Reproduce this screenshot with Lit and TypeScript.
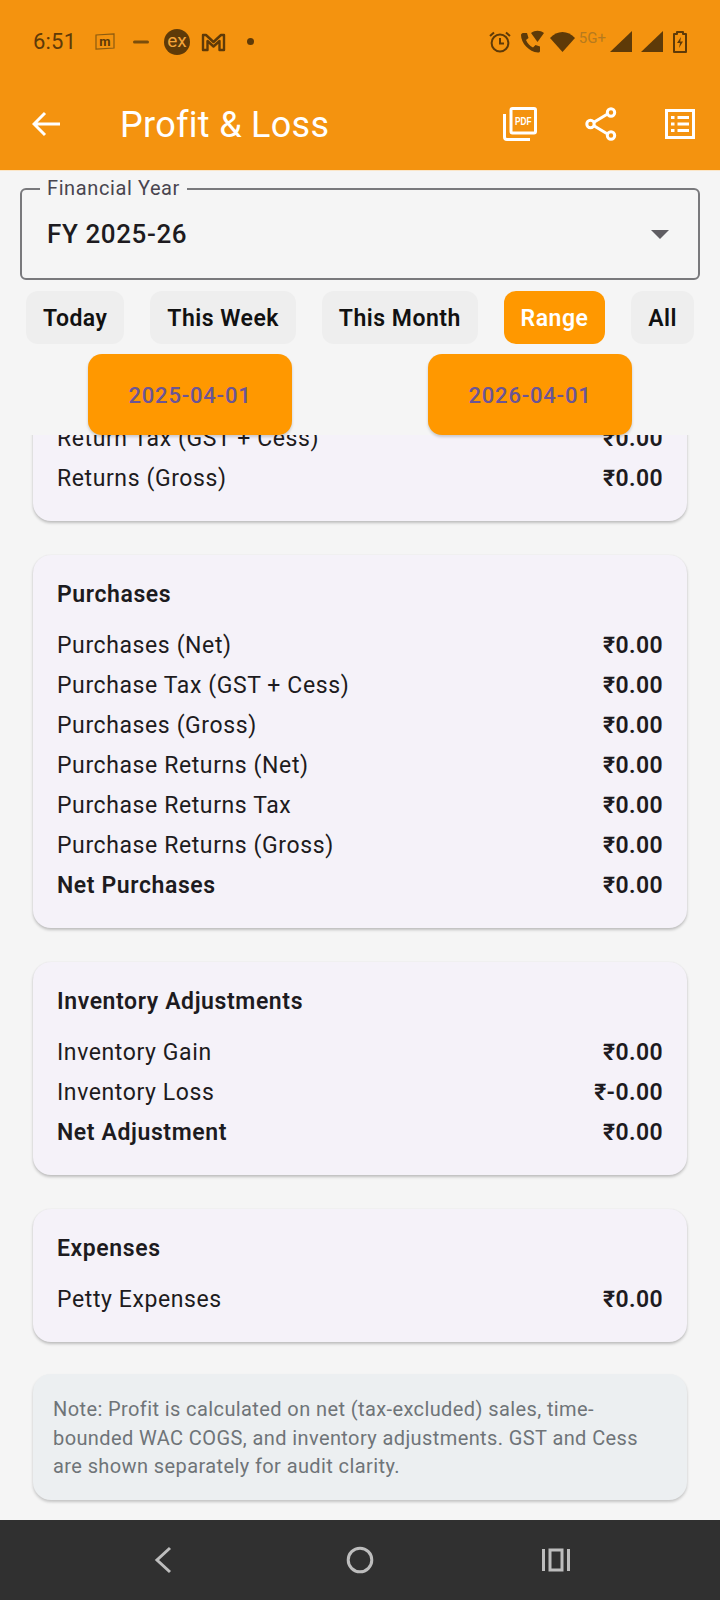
import { css, html, LitElement, TemplateResult } from "lit"
import { customElement } from "lit/decorators.js"

interface Row {
    label: string
    value: string
    bold?: boolean
}

interface Section {
    title: string
    rows: Row[]
}

const SECTIONS: Section[] = [
    {
        title: "Purchases",
        rows: [
            { label: "Purchases (Net)", value: "₹0.00" },
            { label: "Purchase Tax (GST + Cess)", value: "₹0.00" },
            { label: "Purchases (Gross)", value: "₹0.00" },
            { label: "Purchase Returns (Net)", value: "₹0.00" },
            { label: "Purchase Returns Tax", value: "₹0.00" },
            { label: "Purchase Returns (Gross)", value: "₹0.00" },
            { label: "Net Purchases", value: "₹0.00", bold: true },
        ],
    },
    {
        title: "Inventory Adjustments",
        rows: [
            { label: "Inventory Gain", value: "₹0.00" },
            { label: "Inventory Loss", value: "₹-0.00" },
            { label: "Net Adjustment", value: "₹0.00", bold: true },
        ],
    },
    {
        title: "Expenses",
        rows: [{ label: "Petty Expenses", value: "₹0.00" }],
    },
]

const CHIPS = ["Today", "This Week", "This Month", "Range", "All"]

@customElement("app-root")
export class AppRoot extends LitElement {
    static styles = css`
        :host {
            display: block;
            width: 720px;
            height: 1600px;
            font-family: Roboto, sans-serif;
            color: #1d1b20;
        }

        .page {
            display: flex;
            flex-direction: column;
            height: 1600px;
            background: #f5f5f5;
            overflow: hidden;
        }

        .appbar {
            height: 170px;
            flex: none;
            background: #f4930f;
            border-bottom: 1px solid #fbe6c8;
        }

        .status {
            display: flex;
            align-items: center;
            box-sizing: border-box;
            height: 82px;
            padding: 1px 0 0 33px;
            color: #5e3a08;
        }

        .time {
            font-size: 22px;
            width: 60px;
            letter-spacing: 0.2px;
        }

        .status-left {
            display: flex;
            align-items: center;
        }

        .status-right {
            display: flex;
            align-items: center;
            margin-left: auto;
            padding-right: 33px;
        }

        .ex {
            width: 26px;
            height: 26px;
            border-radius: 50%;
            background: #5e3a08;
            color: #f4a53a;
            font-size: 19px;
            line-height: 24px;
            text-align: center;
            margin: 0 11px 0 15px;
        }

        .dot {
            width: 7px;
            height: 7px;
            border-radius: 50%;
            background: #5e3a08;
            margin-left: 21px;
        }

        .net {
            font-size: 15px;
            line-height: 18px;
            color: #b67a1e;
            margin: 0 4px 8px 4px;
        }

        .toolbar {
            display: flex;
            align-items: center;
            height: 84px;
            color: #fff;
        }

        .back {
            width: 120px;
            padding-left: 32px;
            box-sizing: border-box;
            display: flex;
        }

        .title {
            font-size: 36px;
            letter-spacing: 0.3px;
            flex: 1;
            margin-top: 2px;
        }

        .actions {
            display: flex;
            align-items: center;
            gap: 48px;
            padding-right: 25px;
        }

        .pdf-label {
            font-family: "Liberation Sans", sans-serif;
            font-size: 11px;
            font-weight: 700;
            fill: #fff;
        }

        .field {
            position: relative;
            flex: none;
            height: 92px;
            margin: 17px 20px 0;
            box-sizing: border-box;
            border: 2px solid #79797c;
            border-radius: 6px;
            display: flex;
            align-items: center;
            justify-content: space-between;
            padding: 0 29px 0 25px;
        }

        .field-label {
            position: absolute;
            left: 18px;
            top: -13px;
            padding: 0 7px;
            background: #f5f5f5;
            color: #49454f;
            font-size: 20px;
            letter-spacing: 0.6px;
            line-height: 22px;
        }

        .field-value {
            font-size: 26px;
            font-weight: 500;
            letter-spacing: 0.6px;
            color: #1d1b20;
        }

        .caret {
            width: 0;
            height: 0;
            border-left: 9px solid transparent;
            border-right: 9px solid transparent;
            border-top: 9px solid #5f5d62;
        }

        .chips {
            display: flex;
            justify-content: space-between;
            flex: none;
            height: 53px;
            margin: 11px 26px 0;
        }

        .chip {
            display: flex;
            align-items: center;
            box-sizing: border-box;
            padding: 2px 17px 0;
            border-radius: 12px;
            background: #eeeeee;
            color: #111;
            font-size: 23px;
            font-weight: 600;
            letter-spacing: 0.5px;
        }

        .chip.active {
            background: #ff9800;
            color: #fff;
        }

        .dates {
            position: relative;
            z-index: 1;
            display: flex;
            justify-content: center;
            gap: 136px;
            flex: none;
            height: 81px;
            margin-top: 10px;
        }

        .date {
            width: 204px;
            display: flex;
            align-items: center;
            justify-content: center;
            box-sizing: border-box;
            padding-top: 2px;
            border-radius: 14px;
            background: #ff9800;
            color: #6b5596;
            font-size: 22px;
            font-weight: 500;
            letter-spacing: 0.8px;
            box-shadow: 0 2px 3px rgba(0, 0, 0, 0.18);
        }

        .content {
            flex: 1;
            min-height: 0;
            overflow: hidden;
            padding: 0 33px;
            display: flex;
            flex-direction: column;
            gap: 34px;
        }

        .card {
            background: #f5f2f9;
            border-radius: 18px;
            padding: 20px 24px 23px;
            box-shadow: 0 2px 3px rgba(0, 0, 0, 0.22), 0 0 2px rgba(0, 0, 0, 0.06);
        }

        .card.clipped {
            margin-top: -17px;
            padding-top: 0;
            padding-bottom: 23px;
            border-radius: 0 0 18px 18px;
        }

        .card-title {
            font-size: 23px;
            font-weight: 600;
            letter-spacing: 0.6px;
            line-height: 40px;
            margin-bottom: 10px;
        }

        .row {
            display: flex;
            justify-content: space-between;
            align-items: center;
            height: 40px;
            font-size: 23px;
            letter-spacing: 0.6px;
        }

        .row b {
            font-weight: 600;
            letter-spacing: 0.4px;
        }

        .row.bold {
            font-weight: 600;
        }

        .note {
            background: #eceff1;
            border-radius: 18px;
            margin-top: -2px;
            padding: 21px 20px 19px;
            color: #6f7478;
            font-size: 20px;
            line-height: 28.6px;
            letter-spacing: 0.4px;
            box-shadow: 0 2px 3px rgba(0, 0, 0, 0.2);
        }

        .nav {
            flex: none;
            height: 80px;
            background: #303030;
            display: flex;
            align-items: center;
            justify-content: center;
            gap: 168px;
            padding-left: 4px;
        }

        .nav-back {
            margin-right: 6px;
        }
    `

    renderRow(row: Row): TemplateResult {
        return html`<div class="row ${row.bold ? "bold" : ""}">
            <span>${row.label}</span><b>${row.value}</b>
        </div>`
    }

    renderStatus(): TemplateResult {
        return html`<div class="status">
            <div class="status-left">
                <span class="time">6:51</span>
                <svg width="22" height="20" viewBox="0 0 22 20" style="margin-left:1px">
                    <path d="M2 3 L20 2 V16 L2 17 Z" fill="none" stroke="#8a5a10" stroke-width="1.2" />
                    <text x="11" y="14" font-size="13" font-weight="700" font-family="Roboto" text-anchor="middle" fill="#5e3a08">m</text>
                </svg>
                <svg width="16" height="6" viewBox="0 0 16 6" style="margin-left:17px">
                    <rect x="0" y="1.5" width="16" height="3" rx="1.5" fill="#7a4e0c" />
                </svg>
                <div class="ex">ex</div>
                <svg width="25" height="20" viewBox="0 0 25 20">
                    <path d="M2 18 V3 H5 L12.5 10 L20 3 H23 V18 H18.5 V9 L12.5 14.5 L6.5 9 V18 Z" fill="none" stroke="#5e3a08" stroke-width="2.4" stroke-linejoin="round" />
                </svg>
                <div class="dot"></div>
            </div>
            <div class="status-right">
                <svg width="22" height="22" viewBox="0 0 22 22">
                    <circle cx="11" cy="12" r="8.4" fill="none" stroke="#5e3a08" stroke-width="2" />
                    <path d="M11 7 V12.5 H15" fill="none" stroke="#5e3a08" stroke-width="2" />
                    <path d="M1 5 L5 1.5 M21 5 L17 1.5" stroke="#5e3a08" stroke-width="2" />
                </svg>
                <svg width="28" height="24" viewBox="0 0 28 24" style="margin-left:7px">
                    <path d="M5 3 H9 L10.5 8 L8 10 C9.5 13.5 12 16 15 17.5 L17.5 15 L22 16.5 V21 C22 22 21 22.5 20 22.5 C11 22 3 13 3 5 C3 4 4 3 5 3 Z" fill="#5e3a08" />
                    <path d="M13 3 C17 0 22 0 26 3 L19.5 12 Z" fill="#5e3a08" />
                </svg>
                <svg width="25" height="21" viewBox="0 0 25 21" style="margin-left:4px">
                    <path d="M0 7 C7 -1 18 -1 25 7 L12.5 21 Z" fill="#5e3a08" />
                </svg>
                <span class="net">5G+</span>
                <svg width="22" height="21" viewBox="0 0 22 21">
                    <path d="M0 21 L22 0 V21 Z" fill="#5e3a08" />
                </svg>
                <svg width="22" height="21" viewBox="0 0 22 21" style="margin-left:9px">
                    <path d="M0 21 L22 0 V21 Z" fill="#5e3a08" />
                </svg>
                <svg width="14" height="22" viewBox="0 0 14 22" style="margin-left:10px">
                    <path d="M4 1 H10 V3 H13 V21 H1 V3 H4 Z" fill="none" stroke="#5e3a08" stroke-width="2" stroke-linejoin="round" />
                    <path d="M8 6 L4 12 H7 L6 17 L10 10.5 H7.2 Z" fill="#5e3a08" />
                </svg>
            </div>
        </div>`
    }

    renderToolbar(): TemplateResult {
        return html`<div class="toolbar">
            <div class="back">
                <svg width="28" height="26" viewBox="0 0 28 26">
                    <path d="M13 2 L2 13 L13 24 M2 13 H28" fill="none" stroke="#fff" stroke-width="3" />
                </svg>
            </div>
            <div class="title">Profit &amp; Loss</div>
            <div class="actions">
                <svg width="34" height="34" viewBox="0 0 34 34">
                    <rect x="8" y="1.5" width="24.5" height="24.5" rx="1.5" fill="none" stroke="#fff" stroke-width="3" />
                    <path d="M1.5 7 V30 C1.5 31.5 2.5 32.5 4 32.5 H27" fill="none" stroke="#fff" stroke-width="3" />
                    <text class="pdf-label" x="12" y="18" textLength="16.5" lengthAdjust="spacingAndGlyphs">PDF</text>
                </svg>
                <svg width="32" height="34" viewBox="0 0 32 34">
                    <path d="M6 17 L25 5.5 M6 17 L25 28.5" stroke="#fff" stroke-width="3" />
                    <circle cx="5.5" cy="17" r="3.7" fill="#f4930f" stroke="#fff" stroke-width="3" />
                    <circle cx="26" cy="5.5" r="3.7" fill="#f4930f" stroke="#fff" stroke-width="3" />
                    <circle cx="26" cy="28.5" r="3.7" fill="#f4930f" stroke="#fff" stroke-width="3" />
                </svg>
                <svg width="30" height="30" viewBox="0 0 30 30">
                    <rect x="1.5" y="1.5" width="27" height="27" fill="none" stroke="#fff" stroke-width="3" />
                    <path d="M6 8.5 H9.5 M12.5 8.5 H24 M6 15 H9.5 M12.5 15 H24 M6 21.5 H9.5 M12.5 21.5 H24" stroke="#fff" stroke-width="3" />
                </svg>
            </div>
        </div>`
    }

    render(): TemplateResult {
        return html`<div class="page">
            <header class="appbar">${this.renderStatus()} ${this.renderToolbar()}</header>
            <div class="field">
                <span class="field-label">Financial Year</span>
                <span class="field-value">FY 2025-26</span>
                <span class="caret"></span>
            </div>
            <div class="chips">
                ${CHIPS.map(
                    (c) => html`<div class="chip ${c === "Range" ? "active" : ""}">${c}</div>`,
                )}
            </div>
            <div class="dates">
                <div class="date">2025-04-01</div>
                <div class="date">2026-04-01</div>
            </div>
            <div class="content">
                <div class="card clipped">
                    ${this.renderRow({ label: "Return Tax (GST + Cess)", value: "₹0.00" })}
                    ${this.renderRow({ label: "Returns (Gross)", value: "₹0.00" })}
                </div>
                ${SECTIONS.map(
                    (s) => html`<div class="card">
                        <div class="card-title">${s.title}</div>
                        ${s.rows.map((r) => this.renderRow(r))}
                    </div>`,
                )}
                <div class="note">
                    Note: Profit is calculated on net (tax-excluded) sales, time-bounded WAC COGS, and
                    inventory adjustments. GST and Cess are shown separately for audit clarity.
                </div>
            </div>
            <nav class="nav">
                <svg class="nav-back" width="18" height="28" viewBox="0 0 18 28">
                    <path d="M16 2 L3 14 L16 26" fill="none" stroke="#bdbdbd" stroke-width="3" />
                </svg>
                <svg width="28" height="28" viewBox="0 0 28 28">
                    <circle cx="14" cy="14" r="11.8" fill="none" stroke="#bdbdbd" stroke-width="3" />
                </svg>
                <svg width="28" height="24" viewBox="0 0 28 24">
                    <path d="M1.5 1 V23 M26.5 1 V23" stroke="#bdbdbd" stroke-width="3" />
                    <rect x="8" y="2" width="12" height="20" fill="none" stroke="#bdbdbd" stroke-width="3" />
                </svg>
            </nav>
        </div>`
    }
}
